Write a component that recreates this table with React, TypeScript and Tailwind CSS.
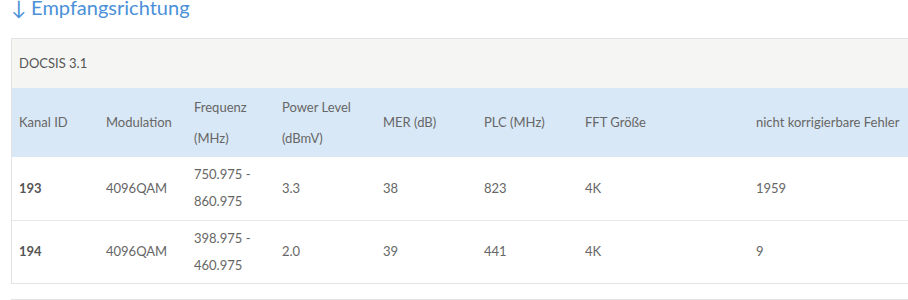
const font = { fontFamily: "Lato, 'Liberation Sans', sans-serif" };

const columns = [
  { label: ["Kanal ID"], width: "w-[87px]" },
  { label: ["Modulation"], width: "w-[88px]" },
  { label: ["Frequenz", "(MHz)"], width: "w-[88px]" },
  { label: ["Power Level", "(dBmV)"], width: "w-[101px]" },
  { label: ["MER (dB)"], width: "w-[101px]" },
  { label: ["PLC (MHz)"], width: "w-[101px]" },
  { label: ["FFT Größe"], width: "w-[171px]" },
  { label: ["nicht korrigierbare Fehler"], width: "w-[240px]" },
];

const rows = [
  ["193", "4096QAM", ["750.975 -", "860.975"], "3.3", "38", "823", "4K", "1959"],
  ["194", "4096QAM", ["398.975 -", "460.975"], "2.0", "39", "441", "4K", "9"],
];

export default function App() {
  return (
    <div className="h-[300px] w-[908px] overflow-hidden bg-white text-[13px] text-[#666]" style={font}>
      {/* Section title, cut at the top of the shot */}
      <h3 className="mt-[-9px] h-[32px] pl-[11px] text-[20px] leading-[32px] text-[#4a90d9]">
        ↓ Empfangsrichtung
      </h3>

      <div className="ml-[11px] mt-[15px] w-[1000px] border border-[#e3e3e3]">
        {/* Panel heading */}
        <div className="flex h-[49px] items-center bg-[#f5f5f4] pl-[7px] text-[#555]">
          DOCSIS 3.1
        </div>

        <table className="border-collapse text-left">
          <thead>
            <tr className="h-[69px] bg-[#d9e8f6]">
              {columns.map((c) => (
                <th key={c.label[0]} className={`${c.width} pl-[7px] align-middle font-normal leading-[31px] text-[#666]`}>
                  {c.label.map((l) => (
                    <div key={l}>{l}</div>
                  ))}
                </th>
              ))}
            </tr>
          </thead>
          <tbody>
            {rows.map((r, i) => (
              <tr key={r[0] as string} className={`h-[63px] ${i > 0 ? "border-t border-[#e8e8e8]" : ""}`}>
                {r.map((cell, j) => (
                  <td
                    key={j}
                    className={`pl-[7px] align-middle leading-[27px] ${j === 0 ? "font-bold text-[#555]" : ""}`}
                  >
                    {Array.isArray(cell) ? cell.map((l) => <div key={l}>{l}</div>) : cell}
                  </td>
                ))}
              </tr>
            ))}
          </tbody>
        </table>
      </div>

      {/* Next panel peeking in at the bottom */}
      <div className="ml-[11px] mt-[15px] h-[40px] w-[1000px] border border-[#e3e3e3] bg-[#f5f5f4]" />
    </div>
  );
}
